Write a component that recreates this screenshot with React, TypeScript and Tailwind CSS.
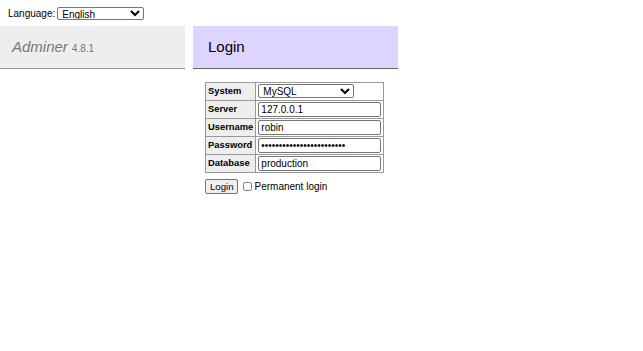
export default function App() {
  const inputCls =
    "h-[15px] w-[123px] rounded-[2px] border border-[#767676] bg-white px-[2px] text-[10px] leading-none text-black outline-none";
  const rows: [string, JSX.Element][] = [
    [
      "System",
      <select className="h-[14px] w-[96px] rounded-[2px] border border-[#767676] bg-white text-[10px] leading-none text-black">
        <option>MySQL</option>
      </select>,
    ],
    ["Server", <input className={inputCls} defaultValue="127.0.0.1" />],
    ["Username", <input className={inputCls} defaultValue="robin" />],
    ["Password", <input type="password" className={inputCls} defaultValue="xxxxxxxxxxxxxxxxxxxxxxxx" />],
    ["Database", <input className={inputCls} defaultValue="production" />],
  ];

  return (
    <div className="h-[351px] w-[643px] bg-white font-['Liberation_Sans',Arial,sans-serif] text-[10px] text-black">
      <div className="flex h-[26px] items-center pl-[8px] text-[10px]">
        <span>Language:</span>
        <select className="ml-[2px] h-[13px] w-[87px] rounded-[2px] border border-[#767676] bg-white text-[10px] leading-none">
          <option>English</option>
        </select>
      </div>
      <div className="flex">
        <div className="flex h-[43px] w-[185px] items-center border-b border-[#999] bg-[#eee] pl-[12px] text-[#777]">
          <span className="text-[15px] italic">Adminer</span>
          <span className="ml-[4px] mt-[2px] text-[10px]">4.8.1</span>
        </div>
        <div className="ml-[8px] flex-1">
          <div className="flex h-[43px] w-[205px] items-center border-b border-[#666] bg-[#ddd4ff] pl-[15px] text-[15px]">
            Login
          </div>
          <div className="ml-[12px] mt-[13px]">
            <table className="border-collapse border border-[#999]">
              <tbody>
                {rows.map(([label, field]) => (
                  <tr key={label} className="h-[18px]">
                    <th className="border border-[#999] bg-[#eee] px-[2px] text-left text-[9.4px] font-bold">{label}</th>
                    <td className="border border-[#999] px-[2px] py-0">{field}</td>
                  </tr>
                ))}
              </tbody>
            </table>
            <div className="mt-[6px] flex items-center">
              <button className="h-[15px] rounded-[2px] border border-[#767676] bg-[#efefef] px-[4px] text-[9.6px] leading-none">
                Login
              </button>
              <label className="ml-[5px] flex items-center">
                <input type="checkbox" className="m-0 h-[9px] w-[9px]" />
                <span className="ml-[2px] text-[10px]">Permanent login</span>
              </label>
            </div>
          </div>
        </div>
      </div>
    </div>
  );
}
